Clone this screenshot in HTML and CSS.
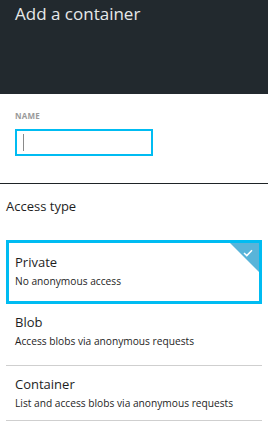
FILE: index.html
```html
<!DOCTYPE html>
<html>
  <head>
    <meta charset="UTF-8" />
    <title>Add a container</title>
    <link rel="stylesheet" href="styles.css">
  </head>
  <body>
    <!-- ブレードのヘッダー -->
    <div class="blade-header">
      <h1>Add a container</h1>
    </div>

    <!-- 名前入力 -->
    <div class="name-section">
      <label for="container-name">NAME</label>
      <div class="name-input"><span class="caret"></span></div>
    </div>

    <!-- アクセス種別 -->
    <div class="access-section">
      <div class="access-title">Access type</div>

      <div class="option selected">
        <div class="option-name">Private</div>
        <div class="option-desc">No anonymous access</div>
        <div class="check-corner">
          <svg width="10" height="8" viewBox="0 0 10 8">
            <path d="M1 4 L3.8 6.6 L9 1.2" fill="none" stroke="#fff" stroke-width="1.5" />
          </svg>
        </div>
      </div>

      <div class="option tall">
        <div class="option-name">Blob</div>
        <div class="option-desc">Access blobs via anonymous requests</div>
      </div>

      <div class="option">
        <div class="option-name">Container</div>
        <div class="option-desc">List and access blobs via anonymous requests</div>
      </div>
    </div>
  </body>
</html>
```

FILE: styles.css
```css
body {
  margin: 0;
  background-color: #fff;
  font-family: "Open Sans", "Noto Sans", sans-serif;
  color: #1e1e1e;
}

/* ヘッダー */
.blade-header {
  height: 94px;
  background-color: #22292e;
  padding: 0 15px;
  box-sizing: border-box;
}
.blade-header h1 {
  margin: 0;
  padding-top: 1px;
  font-size: 17px;
  font-weight: 400;
  color: #e6e8e9;
  line-height: 26px;
}

/* 名前入力 */
.name-section {
  height: 90px;
  padding: 16px 15px 0;
  box-sizing: border-box;
  border-bottom: 1px solid #1e2326;
}
.name-section label {
  display: block;
  font-size: 8px;
  font-weight: 700;
  color: #9a9a9a;
  letter-spacing: 0.2px;
  line-height: 12px;
}
.name-input {
  margin-top: 7px;
  width: 138px;
  height: 27px;
  border: 2px solid #00bcf2;
  box-sizing: border-box;
  padding: 3px 6px;
}
.caret {
  display: block;
  width: 1px;
  height: 17px;
  background-color: #8a8a8a;
}

/* アクセス種別 */
.access-section {
  padding: 0 6px;
}
.access-title {
  padding-top: 13px;
  height: 56px;
  box-sizing: border-box;
  font-size: 13px;
  line-height: 18px;
}

.option {
  position: relative;
  padding: 8px 9px 8px;
  border-bottom: 1px solid #cfcfcf;
}
.option.tall {
  padding-bottom: 15px;
}
.option.selected {
  border: 3px solid #00bcf2;
  padding: 9px 6px 11px;
}
.option-name {
  font-size: 13px;
  line-height: 20px;
}
.option-desc {
  font-size: 10.2px;
  line-height: 18px;
}

/* 選択マーク */
.check-corner {
  position: absolute;
  top: 0;
  right: 0;
  width: 29px;
  height: 29px;
  background-color: #59b4d9;
  clip-path: polygon(0 0, 100% 0, 100% 100%);
}
.check-corner svg {
  position: absolute;
  top: 6px;
  right: 6px;
}
```
